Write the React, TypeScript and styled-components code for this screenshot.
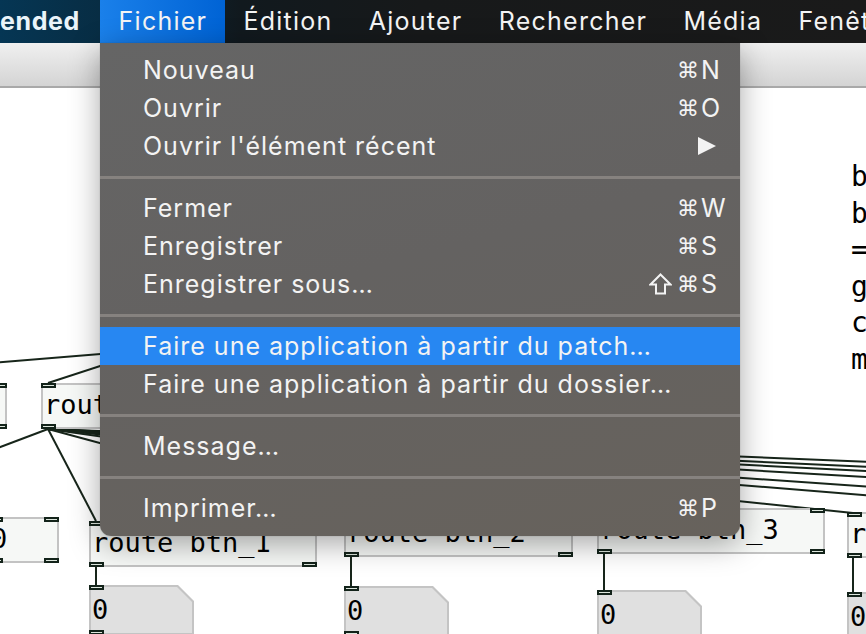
import React from 'react';
import styled, { createGlobalStyle } from 'styled-components';

const Global = createGlobalStyle`
  html, body { margin: 0; padding: 0; background: #fff; overflow: hidden; }
  #root { width: 866px; height: 634px; }
`;

const Screen = styled.div`
  position: relative;
  width: 866px;
  height: 634px;
  overflow: hidden;
  display: flex;
  flex-direction: column;
  background: #fff;
  font-family: Inter, "Noto Sans", "DejaVu Sans", sans-serif;
`;

const MenuBar = styled.div`
  height: 43px;
  flex: none;
  display: flex;
  align-items: stretch;
  background: linear-gradient(90deg, #053654 0px, #082c42 110px, #11191e 240px, #17191a 420px, #1a1a1a 866px);
`;

const AppName = styled.div`
  width: 100px;
  flex: none;
  display: flex;
  align-items: center;
  font-weight: 700;
  font-size: 25px;
  letter-spacing: 0.6px;
  color: #eaf4fa;
  padding-bottom: 1px;
  box-sizing: border-box;
`;

const MenuTitle = styled.div<{ $active?: boolean }>`
  display: flex;
  align-items: center;
  padding: 0 17.6px 1px 18.6px;
  font-size: 25px;
  letter-spacing: 1.25px;
  color: #f4f4f4;
  white-space: nowrap;
  background: ${p => (p.$active ? 'linear-gradient(90deg, #1a80ea, #0063d5)' : 'transparent')};
`;

const Window = styled.div`
  flex: 1;
  display: flex;
  flex-direction: column;
  min-height: 0;
`;

const Toolbar = styled.div`
  height: 43px;
  flex: none;
  background: linear-gradient(180deg, #f0f0f0, #d4d4d4);
  border-bottom: 2px solid #a9a9a9;
`;

const Canvas = styled.div`
  position: relative;
  flex: 1;
  background: #fff;
  overflow: hidden;
`;

const Wires = styled.svg`
  position: absolute;
  left: 0;
  top: 0;
  width: 866px;
  height: 546px;
`;

const PdBox = styled.div`
  position: absolute;
  box-sizing: border-box;
  height: 46px;
  border: 2px solid #c3c3c3;
  background: #f6f8f6;
  font-family: "DejaVu Sans Mono", "Liberation Mono", monospace;
  font-size: 27px;
  line-height: 40px;
  padding-left: 1px;
  color: #000;
  white-space: nowrap;
  overflow: visible;
`;

const Port = styled.span<{ $right?: boolean; $bottom?: boolean; $inset?: number }>`
  position: absolute;
  width: 15px;
  height: 5px;
  box-sizing: border-box;
  border: 2px solid #13231a;
  background: #dde6dd;
  ${p => (p.$right ? `right: ${-(p.$inset ?? 2)}px;` : `left: ${-(p.$inset ?? 2)}px;`)}
  ${p => (p.$bottom ? `bottom: ${-(p.$inset ?? 2)}px;` : `top: ${-(p.$inset ?? 2)}px;`)}
`;

const NumBox = styled.div`
  position: absolute;
  width: 105px;
  height: 50px;
  background: #c4c4c4;
  clip-path: polygon(0 0, calc(100% - 16px) 0, 100% 16px, 100% 100%, 0 100%);
`;

const NumFill = styled.div`
  position: absolute;
  inset: 2px;
  background: #e0e0e0;
  clip-path: polygon(0 0, calc(100% - 15px) 0, 100% 15px, 100% 100%, 0 100%);
  font-family: "DejaVu Sans Mono", "Liberation Mono", monospace;
  font-size: 27px;
  line-height: 46px;
  padding-left: 1px;
  color: #000;
`;

const Comment = styled.div`
  position: absolute;
  left: 851px;
  top: 71px;
  font-family: "DejaVu Sans Mono", "Liberation Mono", monospace;
  font-size: 28px;
  line-height: 36.5px;
  color: #000;
  white-space: pre;
`;

const Dropdown = styled.div`
  position: absolute;
  left: 100px;
  top: 43px;
  width: 640px;
  box-sizing: border-box;
  padding: 8px 0 9px;
  border-radius: 0 0 11px 11px;
  background: linear-gradient(165deg, #656565 0%, #646261 45%, #67625c 100%);
  box-shadow: 0 8px 30px rgba(0, 0, 0, 0.35), 0 0 1px rgba(0, 0, 0, 0.4);
  z-index: 5;
`;

const Item = styled.div<{ $hl?: boolean }>`
  height: 38px;
  display: grid;
  grid-template-columns: minmax(0, 1fr) 34px 63px;
  align-items: center;
  padding-left: 43px;
  font-size: 25px;
  letter-spacing: 1px;
  color: #f3f3f3;
  background: ${p => (p.$hl ? '#2787f2' : 'transparent')};
`;

const Label = styled.span`
  white-space: nowrap;
`;

const Mod = styled.span`
  justify-self: end;
  display: flex;
  align-items: center;
  padding-right: 5px;
`;

const ShiftIcon = styled.svg`
  width: 23px;
  height: 22px;
`;

const Key = styled.span`
  display: flex;
  align-items: center;
  white-space: nowrap;
`;

const Cmd = styled.span`
  font-family: "DejaVu Sans", sans-serif;
  font-size: 22px;
  letter-spacing: 0;
  margin-right: 2px;
`;

const Arrow = styled.svg`
  margin-left: 21px;
  width: 18px;
  height: 18px;
`;

const Separator = styled.div`
  height: 24px;
  display: flex;
  align-items: center;
  &::after {
    content: '';
    display: block;
    width: 100%;
    height: 3px;
    background: #86827f;
  }
`;

type MenuEntry =
  | { sep: true }
  | { sep?: false; label: string; shift?: boolean; key?: string; sub?: boolean; hl?: boolean };

const entries: MenuEntry[] = [
  { label: 'Nouveau', key: 'N' },
  { label: 'Ouvrir', key: 'O' },
  { label: "Ouvrir l'élément récent", sub: true },
  { sep: true },
  { label: 'Fermer', key: 'W' },
  { label: 'Enregistrer', key: 'S' },
  { label: 'Enregistrer sous…', shift: true, key: 'S' },
  { sep: true },
  { label: 'Faire une application à partir du patch…', hl: true },
  { label: 'Faire une application à partir du dossier…' },
  { sep: true },
  { label: 'Message…' },
  { sep: true },
  { label: 'Imprimer…', key: 'P' },
];

const OY = 88;
type Seg = [number, number, number, number];
const wires: Seg[] = [
  [-10, 363, 420, 328],
  [48, 383, 300, 301],
  [48, 429, -50, 466],
  [48, 429, 96, 521],
  [48, 429, 1000, 467],
  [48, 429, 1000, 473],
  [48, 429, 1000, 478],
  [48, 429, 1000, 485],
  [48, 429, 1000, 496],
  [48, 429, 1000, 506],
  [48, 429, 853, 513],
  [48, 429, 604, 508],
  [48, 429, 351, 511],
  [96, 567, 96, 586],
  [351, 557, 351, 587],
  [604, 554, 604, 591],
  [853, 558, 853, 593],
];

type BoxDef = { x: number; y: number; w: number; text: string };
const boxes: BoxDef[] = [
  { x: -100, y: 383, w: 107, text: '' },
  { x: 41, y: 383, w: 300, text: 'route' },
  { x: -12, y: 517, w: 71, text: '0' },
  { x: 89, y: 521, w: 228, text: 'route btn_1' },
  { x: 344, y: 511, w: 229, text: 'route btn_2' },
  { x: 597, y: 508, w: 228, text: 'route btn_3' },
  { x: 847, y: 512, w: 228, text: 'route btn_4' },
];

const nums: { x: number; y: number }[] = [
  { x: 89, y: 585 },
  { x: 344, y: 586 },
  { x: 597, y: 590 },
  { x: 847, y: 592 },
];

export default function App() {
  return (
    <>
      <Global />
      <Screen>
        <MenuBar>
          <AppName>ended</AppName>
          <MenuTitle $active>Fichier</MenuTitle>
          <MenuTitle>Édition</MenuTitle>
          <MenuTitle>Ajouter</MenuTitle>
          <MenuTitle>Rechercher</MenuTitle>
          <MenuTitle>Média</MenuTitle>
          <MenuTitle>Fenêtre</MenuTitle>
        </MenuBar>
        <Window>
          <Toolbar />
          <Canvas>
            <Wires viewBox="0 0 866 546">
              {wires.map(([x1, y1, x2, y2], i) => (
                <line key={i} x1={x1} y1={y1 - OY} x2={x2} y2={y2 - OY} stroke="#17251a" strokeWidth={2} />
              ))}
            </Wires>
            <Comment>{'bang\nbtn\n==\ngate\ncoll\nmsg'}</Comment>
            {boxes.map((b, i) => (
              <PdBox key={i} style={{ left: b.x, top: b.y - OY, width: b.w }}>
                {b.text}
                <Port />
                <Port $right />
                <Port $bottom />
                <Port $right $bottom />
              </PdBox>
            ))}
            {nums.map((n, i) => (
              <NumBox key={i} style={{ left: n.x, top: n.y - OY }}>
                <NumFill>0</NumFill>
                <Port $inset={0} />
                <Port $inset={0} $bottom />
              </NumBox>
            ))}
          </Canvas>
        </Window>
        <Dropdown>
          {entries.map((e, i) =>
            e.sep ? (
              <Separator key={i} />
            ) : (
              <Item key={i} $hl={e.hl}>
                <Label>{e.label}</Label>
                <Mod>
                  {e.shift && (
                    <ShiftIcon viewBox="0 0 23 22">
                      <path
                        d="M11.5 1.5 L21.5 11.5 L16 11.5 L16 20.5 L7 20.5 L7 11.5 L1.5 11.5 Z"
                        fill="none"
                        stroke="#f3f3f3"
                        strokeWidth={2}
                        strokeLinejoin="miter"
                      />
                    </ShiftIcon>
                  )}
                </Mod>
                <Key>
                  {e.key && (
                    <>
                      <Cmd>⌘</Cmd>
                      {e.key}
                    </>
                  )}
                  {e.sub && (
                    <Arrow viewBox="0 0 18 18">
                      <polygon points="0,0 18,9 0,18" fill="#f3f3f3" />
                    </Arrow>
                  )}
                </Key>
              </Item>
            )
          )}
        </Dropdown>
      </Screen>
    </>
  );
}
